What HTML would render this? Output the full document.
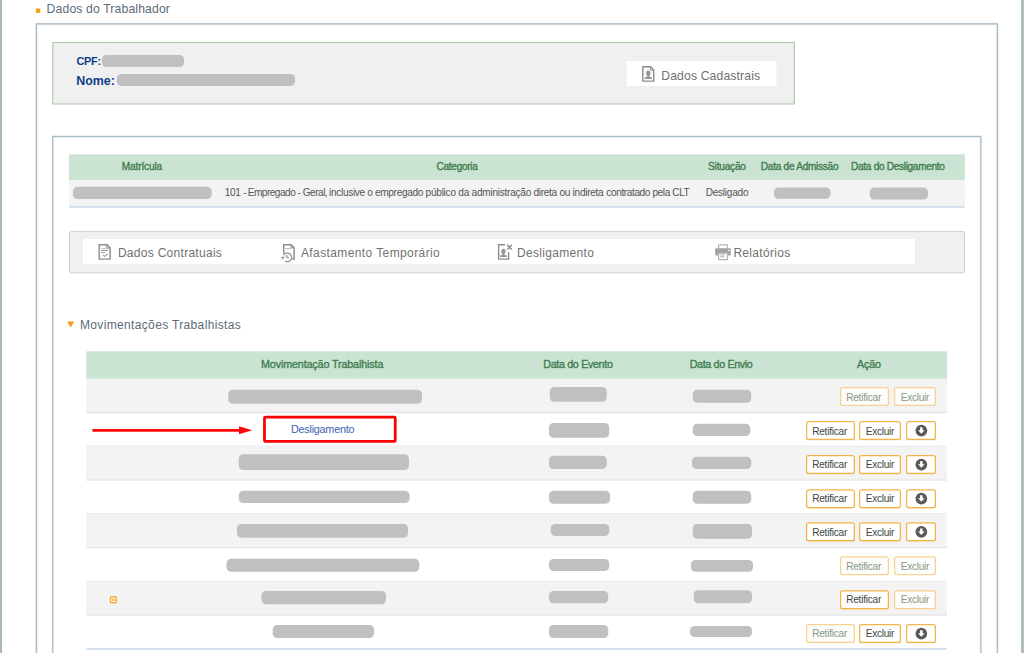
<!DOCTYPE html>
<html lang="pt-BR"><head><meta charset="utf-8"><title>Dados do Trabalhador</title>
<style>
html,body{margin:0;padding:0;}
body{width:1024px;height:653px;overflow:hidden;position:relative;background:#fff;font-family:"Liberation Sans", sans-serif;}
.a{position:absolute;}
.t{position:absolute;white-space:nowrap;line-height:1;}
</style></head><body>
<svg class="a" style="left:0;top:0" width="1024" height="653" viewBox="0 0 1024 653">
<defs><linearGradient id="gb" x1="0" x2="1" y1="0" y2="0"><stop offset="0" stop-color="#a6b8b6"/><stop offset="0.5" stop-color="#a9bbb9"/><stop offset="1" stop-color="#b9c8c6"/></linearGradient></defs>
<rect x="0.00" y="0.00" width="2.00" height="653.00" rx="0.00" fill="#a9bbb9"/>
<rect x="1021.10" y="0.00" width="2.90" height="653.00" rx="0.00" fill="url(#gb)"/>
<rect x="35.90" y="8.60" width="4.40" height="4.30" rx="0.00" fill="#fb9c12"/>
<rect x="36.40" y="23.90" width="961.00" height="734.80" rx="0.00" fill="none" stroke="rgba(150,175,190,.16)" stroke-width="2.60"/>
<rect x="36.38" y="23.82" width="961.05" height="735.55" rx="0.00" fill="none" stroke="#a9bbc6" stroke-width="1.25"/>
<rect x="36.90" y="24.40" width="960.00" height="0.60" rx="0.00" fill="#c9d4dc"/>
<rect x="52.75" y="42.55" width="741.60" height="61.50" rx="0.25" fill="#f0f0f0" stroke="#a8c8a0" stroke-width="1.10"/>
<rect x="626.50" y="61.00" width="149.90" height="24.90" rx="0.00" fill="#ffffff"/>
<rect x="52.75" y="136.55" width="928.10" height="622.20" rx="0.00" fill="none" stroke="rgba(150,175,190,.16)" stroke-width="2.50"/>
<rect x="52.75" y="136.50" width="928.10" height="622.90" rx="0.00" fill="none" stroke="#a9bbc6" stroke-width="1.20"/>
<rect x="69.00" y="154.30" width="895.80" height="25.70" rx="0.00" fill="#cbe3d2"/>
<rect x="69.00" y="180.00" width="895.80" height="26.20" rx="0.00" fill="#f3f3f3"/>
<rect x="69.00" y="206.00" width="895.80" height="1.90" rx="0.00" fill="#d3e0ec"/>
<rect x="69.50" y="231.60" width="895.00" height="41.30" rx="1.70" fill="#f0f0f0" stroke="#cfcfcf" stroke-width="1.00"/>
<rect x="82.90" y="239.00" width="832.10" height="25.25" rx="0.00" fill="#ffffff"/>
<path d="M67.1 321.5 L74.1 321.5 L70.6 327.4 Z" fill="#fb9c12"/>
<rect x="86.30" y="351.30" width="860.70" height="27.55" rx="0.00" fill="#cbe3d2"/>
<rect x="86.30" y="378.80" width="860.70" height="33.70" rx="0.00" fill="#f3f3f3"/>
<rect x="86.30" y="411.90" width="860.70" height="1.20" rx="0.00" fill="#e3e3e3"/>
<rect x="86.30" y="445.67" width="860.70" height="1.20" rx="0.00" fill="#e3e3e3"/>
<rect x="86.30" y="446.27" width="860.70" height="33.77" rx="0.00" fill="#f3f3f3"/>
<rect x="86.30" y="479.44" width="860.70" height="1.20" rx="0.00" fill="#e3e3e3"/>
<rect x="86.30" y="513.21" width="860.70" height="1.20" rx="0.00" fill="#e3e3e3"/>
<rect x="86.30" y="513.81" width="860.70" height="33.77" rx="0.00" fill="#f3f3f3"/>
<rect x="86.30" y="546.98" width="860.70" height="1.20" rx="0.00" fill="#e3e3e3"/>
<rect x="86.30" y="580.75" width="860.70" height="1.20" rx="0.00" fill="#e3e3e3"/>
<rect x="86.30" y="581.35" width="860.70" height="33.77" rx="0.00" fill="#f3f3f3"/>
<rect x="86.30" y="614.52" width="860.70" height="1.20" rx="0.00" fill="#e3e3e3"/>
<rect x="86.30" y="648.09" width="860.70" height="1.90" rx="0.00" fill="#d3e0ec"/>
<rect x="102.00" y="55.00" width="82.00" height="12.00" rx="4.60" fill="#c0c0c0"/>
<rect x="117.00" y="74.00" width="178.00" height="12.00" rx="4.60" fill="#c0c0c0"/>
<rect x="73.00" y="186.75" width="138.75" height="12.25" rx="4.60" fill="#c0c0c0"/>
<rect x="774.00" y="187.50" width="56.50" height="11.25" rx="4.60" fill="#c0c0c0"/>
<rect x="869.75" y="187.50" width="58.25" height="12.00" rx="4.60" fill="#c0c0c0"/>
<rect x="228.25" y="389.75" width="193.75" height="14.00" rx="4.60" fill="#c0c0c0"/>
<rect x="238.75" y="454.25" width="170.25" height="15.75" rx="4.60" fill="#c0c0c0"/>
<rect x="238.75" y="490.75" width="170.75" height="12.25" rx="4.60" fill="#c0c0c0"/>
<rect x="237.00" y="524.00" width="171.00" height="13.75" rx="4.60" fill="#c0c0c0"/>
<rect x="226.50" y="558.75" width="192.75" height="13.00" rx="4.60" fill="#c0c0c0"/>
<rect x="261.50" y="591.00" width="124.50" height="13.25" rx="4.60" fill="#c0c0c0"/>
<rect x="272.75" y="625.00" width="101.25" height="13.00" rx="4.60" fill="#c0c0c0"/>
<rect x="549.75" y="387.00" width="57.00" height="14.75" rx="4.60" fill="#c0c0c0"/>
<rect x="549.00" y="423.00" width="60.25" height="14.75" rx="4.60" fill="#c0c0c0"/>
<rect x="549.00" y="455.75" width="57.75" height="13.25" rx="4.60" fill="#c0c0c0"/>
<rect x="549.00" y="490.75" width="61.00" height="13.00" rx="4.60" fill="#c0c0c0"/>
<rect x="550.75" y="524.00" width="58.50" height="12.00" rx="4.60" fill="#c0c0c0"/>
<rect x="549.00" y="559.00" width="60.25" height="12.00" rx="4.60" fill="#c0c0c0"/>
<rect x="549.00" y="591.00" width="59.25" height="12.25" rx="4.60" fill="#c0c0c0"/>
<rect x="549.00" y="625.00" width="59.25" height="13.00" rx="4.60" fill="#c0c0c0"/>
<rect x="692.75" y="389.75" width="58.50" height="13.00" rx="4.60" fill="#c0c0c0"/>
<rect x="692.75" y="423.75" width="57.50" height="12.25" rx="4.60" fill="#c0c0c0"/>
<rect x="692.00" y="456.75" width="59.25" height="12.25" rx="4.60" fill="#c0c0c0"/>
<rect x="692.75" y="490.75" width="58.50" height="13.00" rx="4.60" fill="#c0c0c0"/>
<rect x="692.75" y="524.00" width="59.25" height="14.75" rx="4.60" fill="#c0c0c0"/>
<rect x="691.00" y="560.00" width="62.00" height="11.75" rx="4.60" fill="#c0c0c0"/>
<rect x="693.75" y="590.25" width="58.25" height="13.00" rx="4.60" fill="#c0c0c0"/>
<rect x="690.00" y="626.00" width="62.00" height="11.00" rx="4.60" fill="#c0c0c0"/>
<line x1="92.4" y1="430.4" x2="241" y2="430.4" stroke="#fd0808" stroke-width="2.7"/><path d="M239 426.3 L252.2 430.35 L239 434.3 Z" fill="#fd0808"/><rect x="264.48" y="417.18" width="130.75" height="24.25" rx="0.9" fill="none" stroke="#ff0000" stroke-width="2.75"/>
<rect x="110.55" y="596.75" width="5.80" height="6.10" rx="1.15" fill="#ffffff" stroke="#f7ad2f" stroke-width="1.50"/>
<rect x="112.30" y="598.70" width="2.30" height="2.20" rx="0.00" fill="#f7ad2f"/>
<rect x="840.62" y="387.73" width="47.75" height="17.75" rx="1.98" fill="#fdfdfc" stroke="#f9d290" stroke-width="1.25"/>
<rect x="894.62" y="387.73" width="40.75" height="17.75" rx="1.98" fill="#fdfdfc" stroke="#f9d290" stroke-width="1.25"/>
<rect x="806.30" y="422.00" width="48.40" height="18.50" rx="2.60" fill="rgba(245,170,40,.22)"/>
<rect x="806.62" y="421.62" width="47.75" height="17.75" rx="1.98" fill="#ffffff" stroke="#f3b447" stroke-width="1.25"/>
<rect x="859.30" y="422.00" width="41.40" height="18.50" rx="2.60" fill="rgba(245,170,40,.22)"/>
<rect x="859.62" y="421.62" width="40.75" height="17.75" rx="1.98" fill="#ffffff" stroke="#f3b447" stroke-width="1.25"/>
<rect x="906.30" y="422.00" width="29.40" height="18.50" rx="2.60" fill="rgba(245,170,40,.22)"/>
<rect x="906.62" y="421.62" width="28.75" height="17.75" rx="1.98" fill="#ffffff" stroke="#f3b447" stroke-width="1.25"/>
<circle cx="921.35" cy="430.55" r="5.85" fill="#595959"/>
<path d="M920.10 427.15 h2.5 v3 h2 l-3.25 3.5 l-3.25 -3.5 h2 Z" fill="#fff"/>
<rect x="806.30" y="456.05" width="48.40" height="18.50" rx="2.60" fill="rgba(245,170,40,.22)"/>
<rect x="806.62" y="455.68" width="47.75" height="17.75" rx="1.98" fill="#ffffff" stroke="#f3b447" stroke-width="1.25"/>
<rect x="859.30" y="456.05" width="41.40" height="18.50" rx="2.60" fill="rgba(245,170,40,.22)"/>
<rect x="859.62" y="455.68" width="40.75" height="17.75" rx="1.98" fill="#ffffff" stroke="#f3b447" stroke-width="1.25"/>
<rect x="906.30" y="456.05" width="29.40" height="18.50" rx="2.60" fill="rgba(245,170,40,.22)"/>
<rect x="906.62" y="455.68" width="28.75" height="17.75" rx="1.98" fill="#ffffff" stroke="#f3b447" stroke-width="1.25"/>
<circle cx="921.35" cy="464.60" r="5.85" fill="#595959"/>
<path d="M920.10 461.20 h2.5 v3 h2 l-3.25 3.5 l-3.25 -3.5 h2 Z" fill="#fff"/>
<rect x="806.30" y="490.15" width="48.40" height="18.50" rx="2.60" fill="rgba(245,170,40,.22)"/>
<rect x="806.62" y="489.77" width="47.75" height="17.75" rx="1.98" fill="#ffffff" stroke="#f3b447" stroke-width="1.25"/>
<rect x="859.30" y="490.15" width="41.40" height="18.50" rx="2.60" fill="rgba(245,170,40,.22)"/>
<rect x="859.62" y="489.77" width="40.75" height="17.75" rx="1.98" fill="#ffffff" stroke="#f3b447" stroke-width="1.25"/>
<rect x="906.30" y="490.15" width="29.40" height="18.50" rx="2.60" fill="rgba(245,170,40,.22)"/>
<rect x="906.62" y="489.77" width="28.75" height="17.75" rx="1.98" fill="#ffffff" stroke="#f3b447" stroke-width="1.25"/>
<circle cx="921.35" cy="498.70" r="5.85" fill="#595959"/>
<path d="M920.10 495.30 h2.5 v3 h2 l-3.25 3.5 l-3.25 -3.5 h2 Z" fill="#fff"/>
<rect x="806.30" y="523.25" width="48.40" height="18.50" rx="2.60" fill="rgba(245,170,40,.22)"/>
<rect x="806.62" y="522.88" width="47.75" height="17.75" rx="1.98" fill="#ffffff" stroke="#f3b447" stroke-width="1.25"/>
<rect x="859.30" y="523.25" width="41.40" height="18.50" rx="2.60" fill="rgba(245,170,40,.22)"/>
<rect x="859.62" y="522.88" width="40.75" height="17.75" rx="1.98" fill="#ffffff" stroke="#f3b447" stroke-width="1.25"/>
<rect x="906.30" y="523.25" width="29.40" height="18.50" rx="2.60" fill="rgba(245,170,40,.22)"/>
<rect x="906.62" y="522.88" width="28.75" height="17.75" rx="1.98" fill="#ffffff" stroke="#f3b447" stroke-width="1.25"/>
<circle cx="921.35" cy="531.80" r="5.85" fill="#595959"/>
<path d="M920.10 528.40 h2.5 v3 h2 l-3.25 3.5 l-3.25 -3.5 h2 Z" fill="#fff"/>
<rect x="840.62" y="556.77" width="47.75" height="17.75" rx="1.98" fill="#fdfdfc" stroke="#f9d290" stroke-width="1.25"/>
<rect x="894.62" y="556.77" width="40.75" height="17.75" rx="1.98" fill="#fdfdfc" stroke="#f9d290" stroke-width="1.25"/>
<rect x="840.30" y="591.25" width="48.40" height="18.50" rx="2.60" fill="rgba(245,170,40,.22)"/>
<rect x="840.62" y="590.88" width="47.75" height="17.75" rx="1.98" fill="#ffffff" stroke="#f3b447" stroke-width="1.25"/>
<rect x="894.62" y="590.88" width="40.75" height="17.75" rx="1.98" fill="#fdfdfc" stroke="#f9d290" stroke-width="1.25"/>
<rect x="806.62" y="624.62" width="47.75" height="17.75" rx="1.98" fill="#fdfdfc" stroke="#f9d290" stroke-width="1.25"/>
<rect x="859.30" y="625.00" width="41.40" height="18.50" rx="2.60" fill="rgba(245,170,40,.22)"/>
<rect x="859.62" y="624.62" width="40.75" height="17.75" rx="1.98" fill="#ffffff" stroke="#f3b447" stroke-width="1.25"/>
<rect x="906.30" y="625.00" width="29.40" height="18.50" rx="2.60" fill="rgba(245,170,40,.22)"/>
<rect x="906.62" y="624.62" width="28.75" height="17.75" rx="1.98" fill="#ffffff" stroke="#f3b447" stroke-width="1.25"/>
<circle cx="921.35" cy="633.55" r="5.85" fill="#595959"/>
<path d="M920.10 630.15 h2.5 v3 h2 l-3.25 3.5 l-3.25 -3.5 h2 Z" fill="#fff"/>
</svg>
<svg class="a" style="left:0;top:0" width="1024" height="653" viewBox="0 0 1024 653" fill="none" stroke-linejoin="miter">
<!-- Dados Cadastrais icon -->
<g stroke="#8e8e8e" stroke-width="1.45">
<path d="M642.8 66.8 H650.5 L653.7 70 V81.1 H642.8 Z"/>
<path d="M650.3 67 V70.2 H653.5" stroke-width="1"/>
</g>
<g fill="#969696">
<ellipse cx="648.3" cy="73.3" rx="2.15" ry="2.75"/>
<rect x="647.3" y="75.2" width="2" height="2.2"/>
<path d="M644.7 78.9 V78.1 Q644.7 76.9 646.4 76.8 H650.2 Q651.9 76.9 651.9 78.1 V78.9 Z"/>
</g>
<!-- Dados Contratuais icon -->
<g stroke="#8e8e8e" stroke-width="1.45">
<path d="M99.2 244.8 H107 L110.1 247.9 V259.1 H99.2 Z"/>
<path d="M106.8 245 V248.1 H109.9" stroke-width="1"/>
<path d="M101.1 248.8 H108" stroke="#bdbdbd" stroke-width="1"/>
<path d="M101.1 250.5 H108" stroke="#9a9a9a" stroke-width="1"/>
<path d="M101.1 252.5 H104.9" stroke="#9a9a9a" stroke-width="1"/>
<path d="M102.8 254.9 L104.6 256.4 L107.9 253.9" stroke="#9a9a9a" stroke-width="1.1"/>
</g>
<!-- Afastamento icon -->
<g stroke="#8e8e8e" stroke-width="1.45">
<path d="M283.7 253.4 V244.8 H291.2 L294.1 247.7 V259 H292.4"/>
<path d="M291 245 V247.9 H293.9" stroke-width="1"/>
<path d="M285.2 248.6 H291" stroke="#c4c4c4" stroke-width="1.2"/>
<path d="M283.6 255.2 A4.3 4.3 0 1 1 285.3 261.2" stroke="#8e8e8e" stroke-width="1.3"/>
<path d="M286.6 255 V256.6 L288.6 258.3" stroke="#8e8e8e" stroke-width="1.2"/>
</g>
<path d="M281 256.9 L284.6 256.6 L282.9 259.4 Z" fill="#8e8e8e"/>
<!-- Desligamento icon -->
<g stroke="#8e8e8e" stroke-width="1.45">
<path d="M505 244.8 H498.6 V259.1 H508.6 V252.3"/>
<path d="M507.2 244.9 L511.8 249.5 M511.8 244.9 L507.2 249.5" stroke-width="1.5"/>
</g>
<g fill="#969696">
<ellipse cx="503.4" cy="251.4" rx="2.1" ry="2.75"/>
<rect x="502.4" y="253.3" width="2" height="2.2"/>
<path d="M499.9 257.1 V256.3 Q499.9 255.1 501.6 255 H505.2 Q506.9 255.1 506.9 256.3 V257.1 Z"/>
</g>
<!-- Printer icon -->
<path d="M718.6 248.6 V245.6 Q718.6 244.8 719.4 244.8 H726.7 Q727.5 244.8 727.5 245.6 V248.6" stroke="#b4b4b4" stroke-width="1.3"/>
<rect x="715.2" y="248.3" width="15.6" height="7.3" rx="1" fill="#a2a2a2"/>
<rect x="718.6" y="253.1" width="8.9" height="6.5" rx="0.6" fill="#fff" stroke="#b4b4b4" stroke-width="1.2"/>
<path d="M720.2 254.9 H725 M720.2 256.8 H724.4" stroke="#b0b0b0" stroke-width="1"/>
<circle cx="728.7" cy="250.5" r="0.8" fill="#fff"/>
</svg>

<div class="t" id="t_title" style="left:46.61px;top:3px;font-size:12.2px;font-weight:400;color:#5c6b7a;letter-spacing:0.142px">Dados do Trabalhador</div>
<div class="t" id="t_cpf" style="left:76.5px;top:56px;font-size:10.9px;font-weight:700;color:#0c3f8a;letter-spacing:-0.261px">CPF:</div>
<div class="t" id="t_nome" style="left:76.23px;top:75px;font-size:12.4px;font-weight:700;color:#0c3f8a;letter-spacing:-0.001px">Nome:</div>
<div class="t" id="t_dc" style="left:661.2px;top:70px;font-size:12.2px;font-weight:400;color:#717171;letter-spacing:0.142px">Dados Cadastrais</div>
<div class="t" id="h1_mat" style="left:121.82px;top:162px;font-size:10.1px;font-weight:400;color:#3f7d50;letter-spacing:-0.153px;-webkit-text-stroke:0.35px #3f7d50">Matrícula</div>
<div class="t" id="h1_cat" style="left:436.59px;top:162px;font-size:10.1px;font-weight:400;color:#3f7d50;letter-spacing:-0.314px;-webkit-text-stroke:0.35px #3f7d50">Categoria</div>
<div class="t" id="h1_sit" style="left:708.08px;top:162px;font-size:10.1px;font-weight:400;color:#3f7d50;letter-spacing:-0.209px;-webkit-text-stroke:0.35px #3f7d50">Situação</div>
<div class="t" id="h1_adm" style="left:760.86px;top:162px;font-size:10.1px;font-weight:400;color:#3f7d50;letter-spacing:-0.285px;-webkit-text-stroke:0.35px #3f7d50">Data de Admissão</div>
<div class="t" id="h1_des" style="left:851.1px;top:162px;font-size:10.1px;font-weight:400;color:#3f7d50;letter-spacing:-0.317px;-webkit-text-stroke:0.35px #3f7d50">Data do Desligamento</div>
<div class="t" id="r1_c1a" style="left:224.63px;top:188px;font-size:10.1px;font-weight:400;color:#555555;letter-spacing:-0.266px">101 - </div>
<div class="t" id="r1_c1b" style="left:247.68px;top:188px;font-size:10.1px;font-weight:400;color:#555555;letter-spacing:-0.508px">Empregado - Geral, </div>
<div class="t" id="r1_c2" style="left:329.1px;top:188px;font-size:10.1px;font-weight:400;color:#555555;letter-spacing:-0.337px">inclusive o empregado </div>
<div class="t" id="r1_c3" style="left:425.57px;top:188px;font-size:10.1px;font-weight:400;color:#555555;letter-spacing:-0.256px">público da administração </div>
<div class="t" id="r1_c4" style="left:533.39px;top:188px;font-size:10.1px;font-weight:400;color:#555555;letter-spacing:-0.284px">direta ou indireta </div>
<div class="t" id="r1_c5" style="left:606.36px;top:188px;font-size:10.1px;font-weight:400;color:#555555;letter-spacing:-0.405px">contratado pela CLT</div>
<div class="t" id="r1_sit" style="left:705.66px;top:188px;font-size:10.1px;font-weight:400;color:#555555;letter-spacing:-0.251px">Desligado</div>
<div class="t" id="tb_1" style="left:117.9px;top:247px;font-size:12px;font-weight:400;color:#717171;letter-spacing:0.287px">Dados Contratuais</div>
<div class="t" id="tb_2" style="left:300.93px;top:247px;font-size:12px;font-weight:400;color:#717171;letter-spacing:0.398px">Afastamento Temporário</div>
<div class="t" id="tb_3" style="left:516.93px;top:247px;font-size:12px;font-weight:400;color:#717171;letter-spacing:0.328px">Desligamento</div>
<div class="t" id="tb_4" style="left:733.38px;top:247px;font-size:12px;font-weight:400;color:#717171;letter-spacing:0.312px">Relatórios</div>
<div class="t" id="t_mov" style="left:79.93px;top:319px;font-size:12px;font-weight:400;color:#5c6b7a;letter-spacing:0.351px">Movimentações Trabalhistas</div>
<div class="t" id="h2_mov" style="left:261.03px;top:359px;font-size:10.7px;font-weight:400;color:#3f7d50;letter-spacing:-0.106px;-webkit-text-stroke:0.35px #3f7d50">Movimentação Trabalhista</div>
<div class="t" id="h2_ev" style="left:543.26px;top:359px;font-size:10.7px;font-weight:400;color:#3f7d50;letter-spacing:-0.315px;-webkit-text-stroke:0.35px #3f7d50">Data do Evento</div>
<div class="t" id="h2_en" style="left:689.69px;top:359px;font-size:10.7px;font-weight:400;color:#3f7d50;letter-spacing:-0.336px;-webkit-text-stroke:0.35px #3f7d50">Data do Envio</div>
<div class="t" id="h2_ac" style="left:857.03px;top:359px;font-size:10.7px;font-weight:400;color:#3f7d50;letter-spacing:-0.141px;-webkit-text-stroke:0.35px #3f7d50">Ação</div>
<div class="t" id="lnk" style="left:290.99px;top:424px;font-size:10.8px;font-weight:400;color:#3c62b4;letter-spacing:-0.232px">Desligamento</div>
<div class="t" id="b0R" style="left:846.18px;top:393px;font-size:10.1px;font-weight:400;color:#87997f;letter-spacing:-0.240px">Retificar</div>
<div class="t" id="b0E" style="left:900.82px;top:393px;font-size:10.1px;font-weight:400;color:#87997f;letter-spacing:-0.295px">Excluir</div>
<div class="t" id="b1R" style="left:812.18px;top:427px;font-size:10.1px;font-weight:400;color:#3d4741;letter-spacing:-0.240px">Retificar</div>
<div class="t" id="b1E" style="left:865.82px;top:427px;font-size:10.1px;font-weight:400;color:#3d4741;letter-spacing:-0.295px">Excluir</div>
<div class="t" id="b2R" style="left:812.18px;top:460px;font-size:10.1px;font-weight:400;color:#3d4741;letter-spacing:-0.240px">Retificar</div>
<div class="t" id="b2E" style="left:865.82px;top:460px;font-size:10.1px;font-weight:400;color:#3d4741;letter-spacing:-0.295px">Excluir</div>
<div class="t" id="b3R" style="left:812.18px;top:494px;font-size:10.1px;font-weight:400;color:#3d4741;letter-spacing:-0.240px">Retificar</div>
<div class="t" id="b3E" style="left:865.82px;top:494px;font-size:10.1px;font-weight:400;color:#3d4741;letter-spacing:-0.295px">Excluir</div>
<div class="t" id="b4R" style="left:812.18px;top:528px;font-size:10.1px;font-weight:400;color:#3d4741;letter-spacing:-0.240px">Retificar</div>
<div class="t" id="b4E" style="left:865.82px;top:528px;font-size:10.1px;font-weight:400;color:#3d4741;letter-spacing:-0.295px">Excluir</div>
<div class="t" id="b5R" style="left:846.18px;top:562px;font-size:10.1px;font-weight:400;color:#87997f;letter-spacing:-0.240px">Retificar</div>
<div class="t" id="b5E" style="left:900.82px;top:562px;font-size:10.1px;font-weight:400;color:#87997f;letter-spacing:-0.295px">Excluir</div>
<div class="t" id="b6R" style="left:846.18px;top:595px;font-size:10.1px;font-weight:400;color:#3d4741;letter-spacing:-0.240px">Retificar</div>
<div class="t" id="b6E" style="left:900.82px;top:595px;font-size:10.1px;font-weight:400;color:#87997f;letter-spacing:-0.295px">Excluir</div>
<div class="t" id="b7R" style="left:812.18px;top:629px;font-size:10.1px;font-weight:400;color:#87997f;letter-spacing:-0.240px">Retificar</div>
<div class="t" id="b7E" style="left:865.82px;top:629px;font-size:10.1px;font-weight:400;color:#3d4741;letter-spacing:-0.295px">Excluir</div>
</body></html>
